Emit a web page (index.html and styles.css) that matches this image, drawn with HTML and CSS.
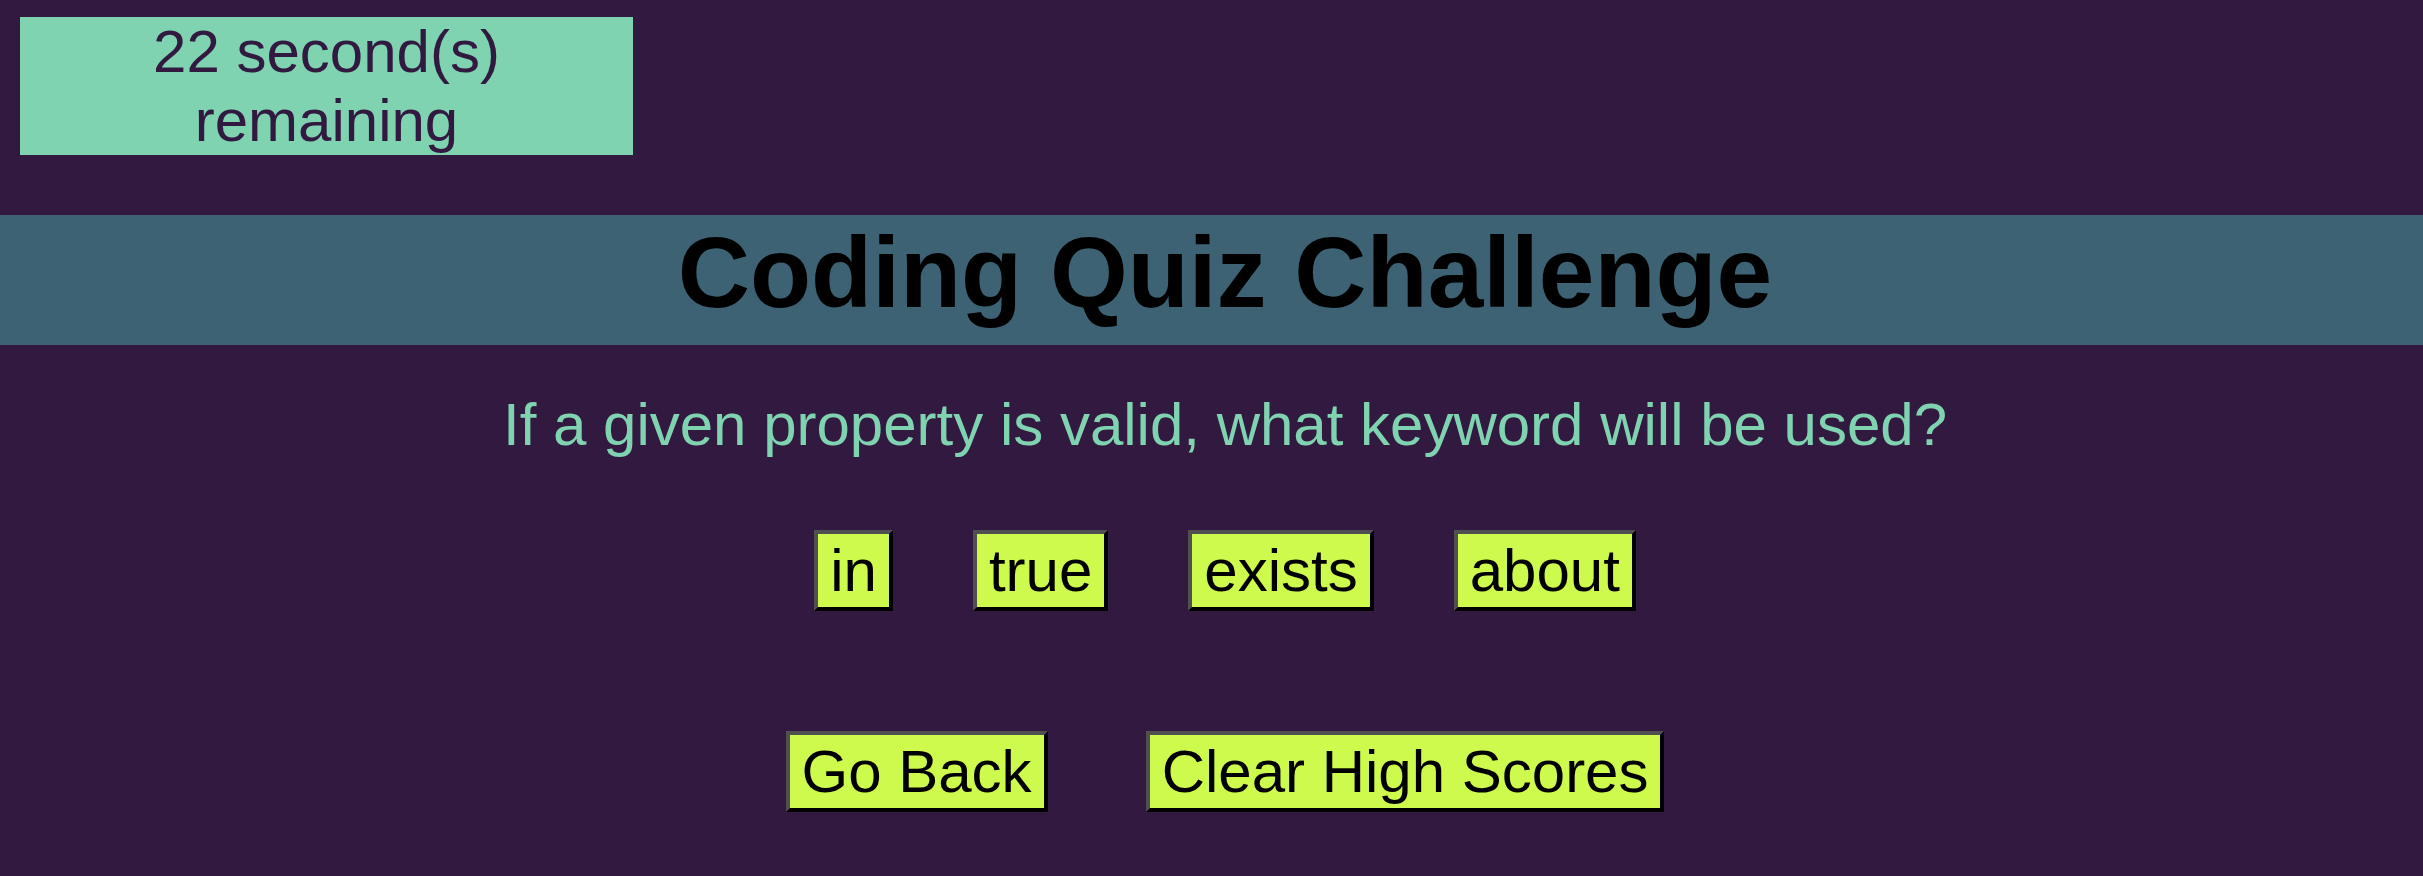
FILE: index.html
```html
<!DOCTYPE html>
<html lang="en">
<head>
<meta charset="utf-8">
<title>Coding Quiz Challenge</title>
<link rel="stylesheet" href="styles.css">
</head>
<body>
<div class="page">
  <div class="timer">22 second(s) remaining</div>
  <header class="header">
    <h1 class="title">Coding Quiz Challenge</h1>
  </header>
  <p class="question">If a given property is valid, what keyword will be used?</p>
  <div class="answers">
    <button class="btn">in</button>
    <button class="btn">true</button>
    <button class="btn">exists</button>
    <button class="btn">about</button>
  </div>
  <div class="controls">
    <button class="btn">Go Back</button>
    <button class="btn">Clear High Scores</button>
  </div>
</div>
</body>
</html>
```

FILE: styles.css
```css
html, body {
  margin: 0;
  padding: 0;
}

body {
  background: #32193f;
  font-family: "Liberation Sans", Arial, sans-serif;
  overflow: hidden;
}

.page {
  display: flex;
  flex-direction: column;
  padding-top: 17px;
}

.timer {
  width: 613px;
  margin-left: 20px;
  background: #7fd3b1;
  color: #32193f;
  font-size: 60px;
  line-height: 69px;
  text-align: center;
}

.header {
  margin-top: 60px;
  height: 130px;
  box-sizing: border-box;
  padding-left: 27px;
  background: #3c6273;
}

.title {
  margin: 0;
  font-size: 100px;
  line-height: 115px;
  font-weight: bold;
  color: #000;
  text-align: center;
}

.question {
  margin: 45px 0 0;
  padding-left: 27px;
  font-size: 60px;
  line-height: 69px;
  color: #7fd3b1;
  text-align: center;
}

.answers {
  margin-top: 71px;
  padding-left: 27px;
  display: flex;
  justify-content: center;
  gap: 80px;
}

.controls {
  margin-top: 120px;
  padding-left: 27px;
  display: flex;
  justify-content: center;
  gap: 98px;
}

.btn {
  font-family: "Liberation Sans", Arial, sans-serif;
  font-size: 60px;
  line-height: 69px;
  padding: 2px 12px;
  margin: 0;
  border-width: 4px;
  border-style: solid;
  border-color: #505050 #000 #000 #505050;
  background: #cdfa4d;
  color: #000;
}
```
